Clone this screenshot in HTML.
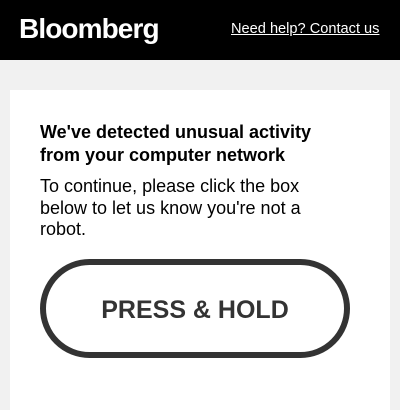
<!DOCTYPE html>
<html><head><style>
*{margin:0;padding:0;box-sizing:border-box}
body{width:400px;height:400px;overflow:hidden;background:#f1f1f1;font-family:"Liberation Sans",Arial,sans-serif}
.hd{position:absolute;left:0;top:0;width:400px;height:60px;background:#000}
.logo{position:absolute;left:19px;top:13px;color:#fff;font-weight:bold;font-size:28px;letter-spacing:-0.9px}
.help{position:absolute;left:231px;top:21px;color:#fff;font-size:14.6px;text-decoration:underline}
.card{position:absolute;left:10px;top:90px;width:380px;height:320px;background:#fff}
h1{position:absolute;left:40px;top:121px;font-size:18px;line-height:23px;font-weight:bold;color:#000;width:295px}
p{position:absolute;left:40px;top:176px;font-size:18px;line-height:21.5px;color:#000;width:300px}
.btn{position:absolute;left:40px;top:259px;width:310px;height:99px;border:6px solid #333;border-radius:50px;display:flex;align-items:center;justify-content:center;font-weight:bold;font-size:25px;color:#333;padding-top:3px}
</style></head><body>
<div class="hd"><div class="logo">Bloomberg</div><div class="help">Need help? Contact us</div></div>
<div class="card"></div>
<h1>We've detected unusual activity from your computer network</h1>
<p>To continue, please click the box below to let us know you're not a robot.</p>
<div class="btn">PRESS &amp; HOLD</div>
</body></html>
